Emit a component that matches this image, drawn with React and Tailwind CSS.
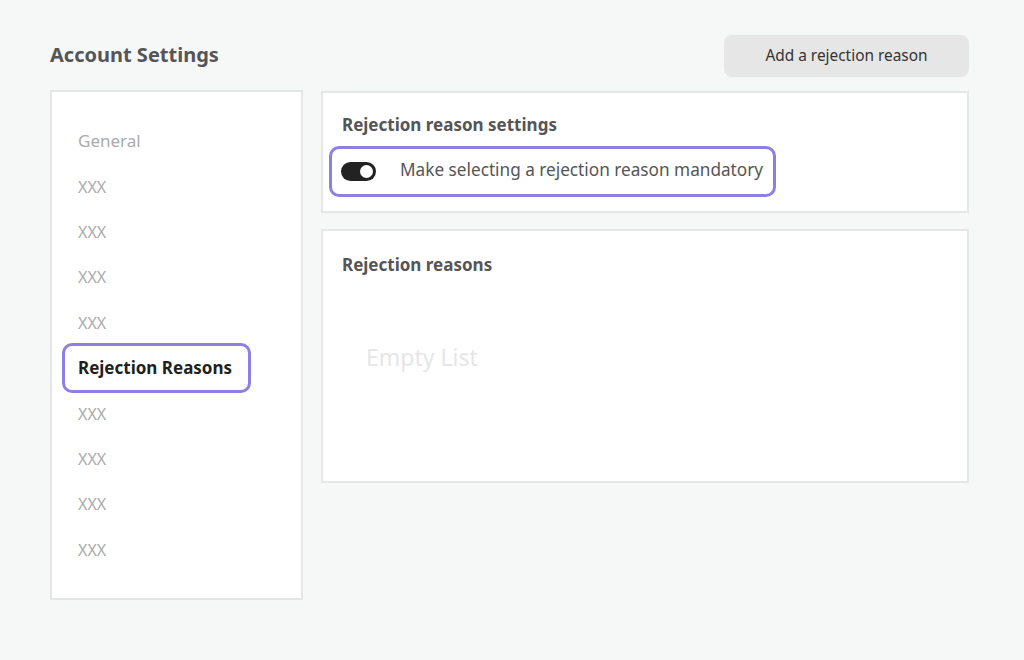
export default function App() {
  const items = ['General', 'XXX', 'XXX', 'XXX', 'XXX', 'Rejection Reasons', 'XXX', 'XXX', 'XXX', 'XXX'];

  return (
    <div className="w-[1024px] h-[660px] bg-[#f6f7f7] px-[50px] pt-[35px] font-['Noto_Sans',sans-serif]">
      <header className="flex items-center justify-between w-[919px] h-[42px]">
        <h1 className="text-[20px] font-bold text-[#555] leading-none -mt-[3px]">Account Settings</h1>
        <button className="w-[245px] h-[42px] rounded-lg bg-[#e6e6e6] text-[15.4px] text-[#333]">
          Add a rejection reason
        </button>
      </header>

      <div className="flex gap-[18px] mt-[13px]">
        {/* Sidebar */}
        <nav className="w-[253px] h-[510px] bg-white border-2 border-[#e5e6e6] pt-[26.5px]">
          {items.map((item, i) =>
            item === 'Rejection Reasons' ? (
              <div
                key={i}
                className="ml-[10px] w-[189px] h-[50px] -my-[2.3px] flex items-center pl-[13px] border-[3px] border-[#8d7fe3] rounded-[10px] text-[17px] font-bold text-[#1f1f1f]"
              >
                {item}
              </div>
            ) : (
              <div
                key={i}
                className={`h-[45.4px] flex items-center pl-[26px] text-[#ababab] ${item === 'General' ? 'text-[17px]' : 'text-[16px]'}`}
              >
                {item}
              </div>
            )
          )}
        </nav>

        {/* Main */}
        <div className="flex flex-col gap-[16px] pt-px">
          <section className="w-[648px] h-[122px] bg-white border-2 border-[#e5e6e6] pt-[20px]">
            <h2 className="pl-[19px] text-[17px] leading-6 font-bold text-[#555]">Rejection reason settings</h2>
            <div className="ml-[6px] mt-[9px] w-[447px] h-[51px] flex items-center pl-[9px] pb-[3px] border-[3px] border-[#8d7fe3] rounded-[10px]">
              <span className="relative w-[35px] h-[19px] mt-[3px] rounded-full bg-[#222]">
                <span className="absolute right-[1px] top-[1px] w-[17px] h-[17px] rounded-full bg-white border-2 border-[#222]" />
              </span>
              <span className="ml-[24px] text-[17.2px] text-[#555]">Make selecting a rejection reason mandatory</span>
            </div>
          </section>

          <section className="w-[648px] h-[254px] bg-white border-2 border-[#e5e6e6] pt-[22px]">
            <h2 className="pl-[19px] text-[17px] leading-6 font-bold text-[#555]">Rejection reasons</h2>
            <p className="pl-[43px] mt-[64px] text-[23px] leading-8 text-[#e6e6e6]">Empty List</p>
          </section>
        </div>
      </div>
    </div>
  );
}
